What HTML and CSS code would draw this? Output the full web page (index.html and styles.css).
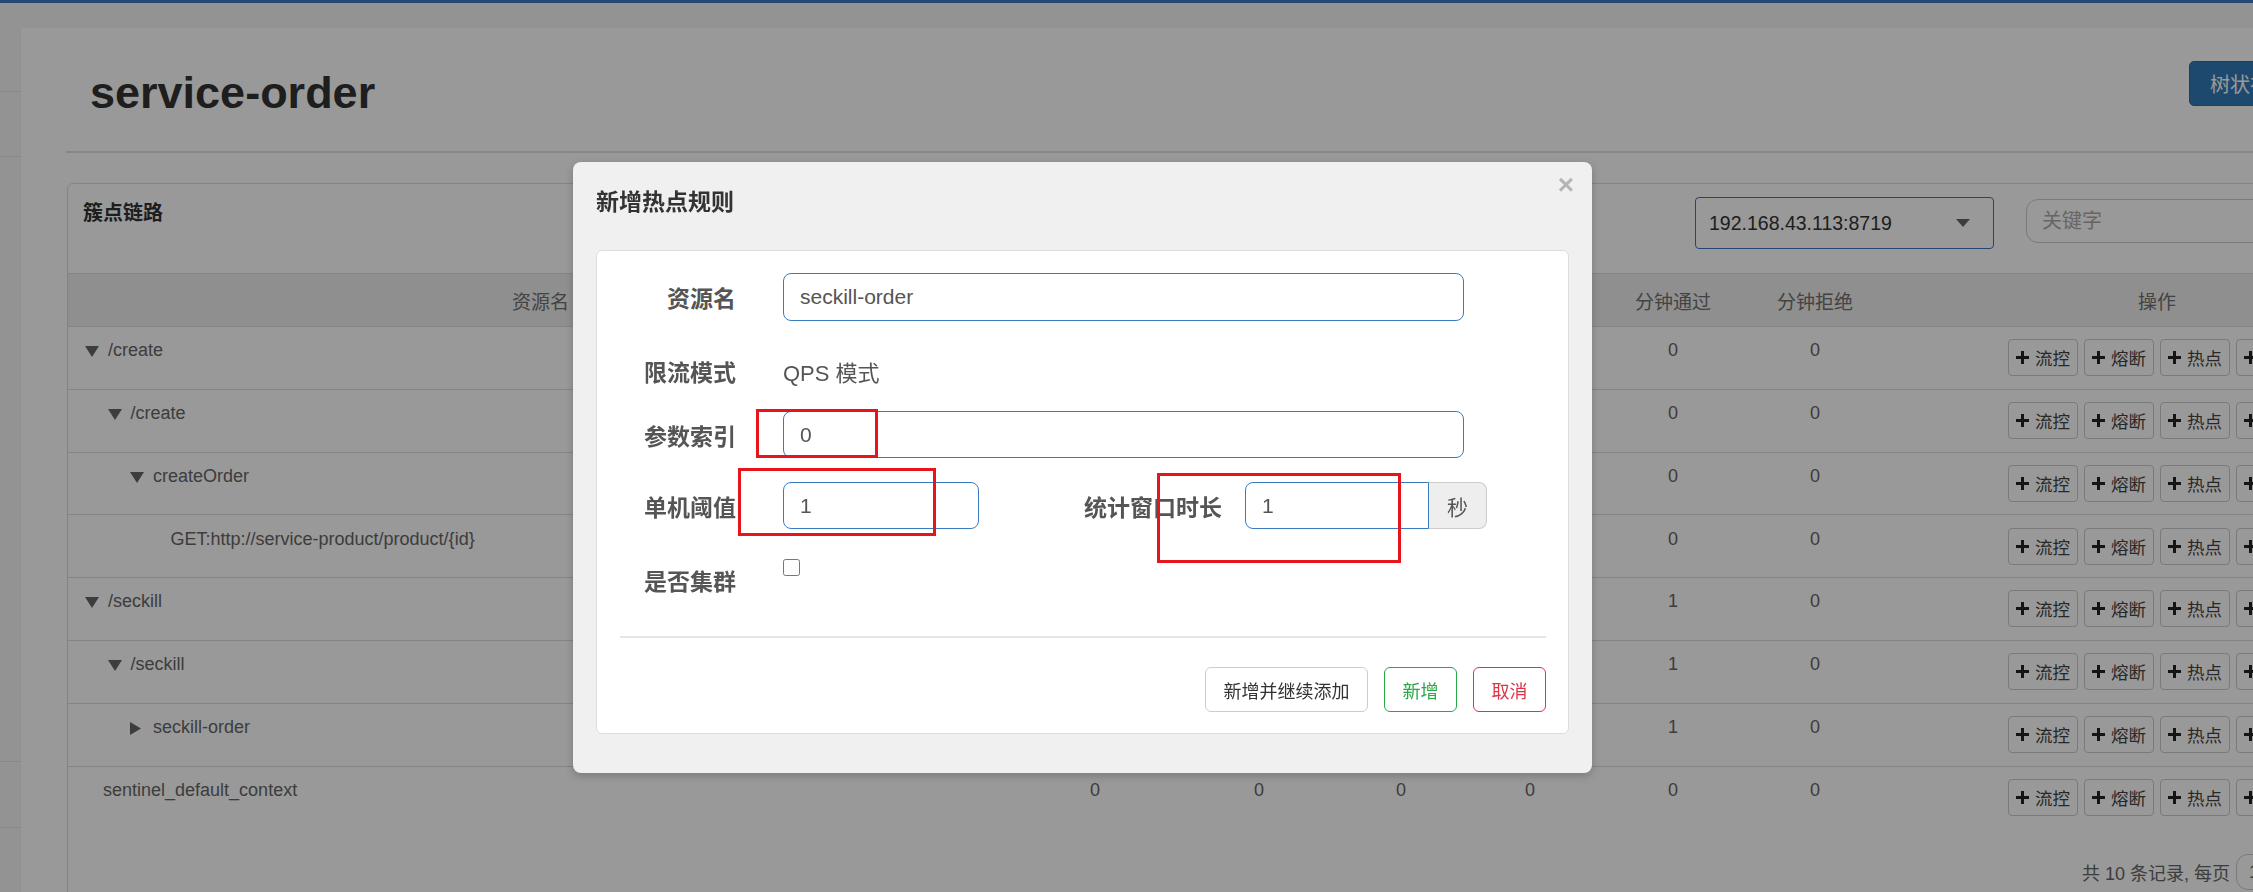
FILE: index.html
```html
<!DOCTYPE html>
<html lang="zh-CN">
<head>
    <meta charset="UTF-8">
    <meta name="viewport" content="width=device-width, initial-scale=1.0">
    <title>Sentinel 控制台 - 簇点链路</title>
    <link rel="stylesheet" href="styles.css">
</head>
<body>
    <div class="top-line"></div>
    <div class="app">
        <aside class="sidebar">
            <div class="side-item side-a"></div>
            <div class="side-item side-b"></div>
            <div class="side-item side-c"></div>
            <div class="side-item side-d"></div>
        </aside>

        <main class="content">
            <div class="crumb-bar"></div>
            <div class="page-header">
                <h1>service-order</h1>
                <div class="view-switch">
                    <button class="btn-view active">树状视图</button>
                    <button class="btn-view">列表视图</button>
                </div>
            </div>

            <div class="panel">
                <div class="panel-heading">
                    <h3>簇点链路</h3>
                    <div class="heading-tools">
                        <div class="machine-select">192.168.43.113:8719</div>
                        <input type="text" class="search-input" placeholder="关键字">
                        <button class="btn-search">刷新</button>
                    </div>
                </div>

                <table class="resource-table">
                    <colgroup>
                        <col class="col-name">
                        <col class="col-qps">
                        <col class="col-qps">
                        <col class="col-thread">
                        <col class="col-rt">
                        <col class="col-min">
                        <col class="col-min2">
                        <col>
                    </colgroup>
                    <thead>
                        <tr>
                            <th>资源名</th>
                            <th>通过QPS</th>
                            <th>拒绝QPS</th>
                            <th>并发数</th>
                            <th>平均RT</th>
                            <th>分钟通过</th>
                            <th>分钟拒绝</th>
                            <th>操作</th>
                        </tr>
                    </thead>
                    <tbody>
                        <tr>
                            <td class="name"><span class="toggle"><svg class="caret-down" viewBox="0 0 14 11"><path d="M0 0h14L7 11z"/></svg></span>/create</td>
                            <td>0</td><td>0</td><td>0</td><td>0</td><td>0</td><td>0</td>
                            <td><div class="ops"><button class="btn-op"><svg class="plus" viewBox="0 0 13 13"><path d="M5 0h3v5h5v3H8v5H5V8H0V5h5z"/></svg>流控</button><button class="btn-op"><svg class="plus" viewBox="0 0 13 13"><path d="M5 0h3v5h5v3H8v5H5V8H0V5h5z"/></svg>熔断</button><button class="btn-op"><svg class="plus" viewBox="0 0 13 13"><path d="M5 0h3v5h5v3H8v5H5V8H0V5h5z"/></svg>热点</button><button class="btn-op"><svg class="plus" viewBox="0 0 13 13"><path d="M5 0h3v5h5v3H8v5H5V8H0V5h5z"/></svg>授权</button></div></td>
                        </tr>
                        <tr>
                            <td class="name"><span class="indent lv1"></span><span class="toggle"><svg class="caret-down" viewBox="0 0 14 11"><path d="M0 0h14L7 11z"/></svg></span>/create</td>
                            <td>0</td><td>0</td><td>0</td><td>0</td><td>0</td><td>0</td>
                            <td><div class="ops"><button class="btn-op"><svg class="plus" viewBox="0 0 13 13"><path d="M5 0h3v5h5v3H8v5H5V8H0V5h5z"/></svg>流控</button><button class="btn-op"><svg class="plus" viewBox="0 0 13 13"><path d="M5 0h3v5h5v3H8v5H5V8H0V5h5z"/></svg>熔断</button><button class="btn-op"><svg class="plus" viewBox="0 0 13 13"><path d="M5 0h3v5h5v3H8v5H5V8H0V5h5z"/></svg>热点</button><button class="btn-op"><svg class="plus" viewBox="0 0 13 13"><path d="M5 0h3v5h5v3H8v5H5V8H0V5h5z"/></svg>授权</button></div></td>
                        </tr>
                        <tr>
                            <td class="name"><span class="indent lv2"></span><span class="toggle"><svg class="caret-down" viewBox="0 0 14 11"><path d="M0 0h14L7 11z"/></svg></span>createOrder</td>
                            <td>0</td><td>0</td><td>0</td><td>0</td><td>0</td><td>0</td>
                            <td><div class="ops"><button class="btn-op"><svg class="plus" viewBox="0 0 13 13"><path d="M5 0h3v5h5v3H8v5H5V8H0V5h5z"/></svg>流控</button><button class="btn-op"><svg class="plus" viewBox="0 0 13 13"><path d="M5 0h3v5h5v3H8v5H5V8H0V5h5z"/></svg>熔断</button><button class="btn-op"><svg class="plus" viewBox="0 0 13 13"><path d="M5 0h3v5h5v3H8v5H5V8H0V5h5z"/></svg>热点</button><button class="btn-op"><svg class="plus" viewBox="0 0 13 13"><path d="M5 0h3v5h5v3H8v5H5V8H0V5h5z"/></svg>授权</button></div></td>
                        </tr>
                        <tr>
                            <td class="name"><span class="indent lv3"></span><span class="leaf"></span>GET:http://service-product/product/{id}</td>
                            <td>0</td><td>0</td><td>0</td><td>0</td><td>0</td><td>0</td>
                            <td><div class="ops"><button class="btn-op"><svg class="plus" viewBox="0 0 13 13"><path d="M5 0h3v5h5v3H8v5H5V8H0V5h5z"/></svg>流控</button><button class="btn-op"><svg class="plus" viewBox="0 0 13 13"><path d="M5 0h3v5h5v3H8v5H5V8H0V5h5z"/></svg>熔断</button><button class="btn-op"><svg class="plus" viewBox="0 0 13 13"><path d="M5 0h3v5h5v3H8v5H5V8H0V5h5z"/></svg>热点</button><button class="btn-op"><svg class="plus" viewBox="0 0 13 13"><path d="M5 0h3v5h5v3H8v5H5V8H0V5h5z"/></svg>授权</button></div></td>
                        </tr>
                        <tr>
                            <td class="name"><span class="toggle"><svg class="caret-down" viewBox="0 0 14 11"><path d="M0 0h14L7 11z"/></svg></span>/seckill</td>
                            <td>0</td><td>0</td><td>0</td><td>0</td><td>1</td><td>0</td>
                            <td><div class="ops"><button class="btn-op"><svg class="plus" viewBox="0 0 13 13"><path d="M5 0h3v5h5v3H8v5H5V8H0V5h5z"/></svg>流控</button><button class="btn-op"><svg class="plus" viewBox="0 0 13 13"><path d="M5 0h3v5h5v3H8v5H5V8H0V5h5z"/></svg>熔断</button><button class="btn-op"><svg class="plus" viewBox="0 0 13 13"><path d="M5 0h3v5h5v3H8v5H5V8H0V5h5z"/></svg>热点</button><button class="btn-op"><svg class="plus" viewBox="0 0 13 13"><path d="M5 0h3v5h5v3H8v5H5V8H0V5h5z"/></svg>授权</button></div></td>
                        </tr>
                        <tr>
                            <td class="name"><span class="indent lv1"></span><span class="toggle"><svg class="caret-down" viewBox="0 0 14 11"><path d="M0 0h14L7 11z"/></svg></span>/seckill</td>
                            <td>0</td><td>0</td><td>0</td><td>0</td><td>1</td><td>0</td>
                            <td><div class="ops"><button class="btn-op"><svg class="plus" viewBox="0 0 13 13"><path d="M5 0h3v5h5v3H8v5H5V8H0V5h5z"/></svg>流控</button><button class="btn-op"><svg class="plus" viewBox="0 0 13 13"><path d="M5 0h3v5h5v3H8v5H5V8H0V5h5z"/></svg>熔断</button><button class="btn-op"><svg class="plus" viewBox="0 0 13 13"><path d="M5 0h3v5h5v3H8v5H5V8H0V5h5z"/></svg>热点</button><button class="btn-op"><svg class="plus" viewBox="0 0 13 13"><path d="M5 0h3v5h5v3H8v5H5V8H0V5h5z"/></svg>授权</button></div></td>
                        </tr>
                        <tr>
                            <td class="name"><span class="indent lv2"></span><span class="toggle"><svg class="caret-right" viewBox="0 0 11 13"><path d="M0 0l11 6.5L0 13z"/></svg></span>seckill-order</td>
                            <td>0</td><td>0</td><td>0</td><td>0</td><td>1</td><td>0</td>
                            <td><div class="ops"><button class="btn-op"><svg class="plus" viewBox="0 0 13 13"><path d="M5 0h3v5h5v3H8v5H5V8H0V5h5z"/></svg>流控</button><button class="btn-op"><svg class="plus" viewBox="0 0 13 13"><path d="M5 0h3v5h5v3H8v5H5V8H0V5h5z"/></svg>熔断</button><button class="btn-op"><svg class="plus" viewBox="0 0 13 13"><path d="M5 0h3v5h5v3H8v5H5V8H0V5h5z"/></svg>热点</button><button class="btn-op"><svg class="plus" viewBox="0 0 13 13"><path d="M5 0h3v5h5v3H8v5H5V8H0V5h5z"/></svg>授权</button></div></td>
                        </tr>
                        <tr class="last">
                            <td class="name"><span class="leaf"></span>sentinel_default_context</td>
                            <td>0</td><td>0</td><td>0</td><td>0</td><td>0</td><td>0</td>
                            <td><div class="ops"><button class="btn-op"><svg class="plus" viewBox="0 0 13 13"><path d="M5 0h3v5h5v3H8v5H5V8H0V5h5z"/></svg>流控</button><button class="btn-op"><svg class="plus" viewBox="0 0 13 13"><path d="M5 0h3v5h5v3H8v5H5V8H0V5h5z"/></svg>熔断</button><button class="btn-op"><svg class="plus" viewBox="0 0 13 13"><path d="M5 0h3v5h5v3H8v5H5V8H0V5h5z"/></svg>热点</button><button class="btn-op"><svg class="plus" viewBox="0 0 13 13"><path d="M5 0h3v5h5v3H8v5H5V8H0V5h5z"/></svg>授权</button></div></td>
                        </tr>
                    </tbody>
                </table>

                <div class="pager">
                    <span>共 10 条记录, 每页</span>
                    <div class="page-size">16</div>
                    <span class="pager-tail">条记录</span>
                </div>
            </div>
        </main>
    </div>

    <div class="backdrop"></div>

    <div class="modal">
        <div class="modal-header">
            <h4>新增热点规则</h4>
            <span class="close">×</span>
        </div>
        <div class="modal-card">
            <div class="form-row">
                <label class="form-label">资源名</label>
                <input type="text" class="form-input wide" value="seckill-order">
            </div>
            <div class="form-row row-static">
                <label class="form-label">限流模式</label>
                <span class="static-text">QPS 模式</span>
            </div>
            <div class="form-row row-index">
                <label class="form-label">参数索引</label>
                <input type="text" class="form-input wide" value="0">
            </div>
            <div class="form-row row-count">
                <label class="form-label">单机阈值</label>
                <input type="text" class="form-input short" value="1">
                <label class="form-label label-window">统计窗口时长</label>
                <div class="input-group">
                    <input type="text" class="form-input group-input" value="1">
                    <span class="addon">秒</span>
                </div>
            </div>
            <div class="form-row row-cluster">
                <label class="form-label">是否集群</label>
                <input type="checkbox" class="cluster-check">
            </div>
            <div class="divider"></div>
            <div class="modal-footer">
                <button class="btn btn-plain">新增并继续添加</button>
                <button class="btn btn-ok">新增</button>
                <button class="btn btn-cancel">取消</button>
            </div>
        </div>

        <div class="mark mark-index"></div>
        <div class="mark mark-count"></div>
        <div class="mark mark-window"></div>
    </div>
</body>
</html>
```

FILE: styles.css
```css
* {
    box-sizing: border-box;
}

body {
    margin: 0;
    width: 2253px;
    height: 892px;
    overflow: hidden;
    font-family: "Liberation Sans", "Noto Sans CJK SC", sans-serif;
    background-color: #fff;
    position: relative;
}

.top-line {
    height: 3px;
    background-color: #3b7bbf;
}

.app {
    display: flex;
}

/* left menu, collapsed */
.sidebar {
    width: 21px;
    flex: none;
    height: 889px;
    background-color: #f5f5f5;
}

.side-item {
    border-bottom: 1px solid #e2e2e2;
}

.side-a { height: 89px; }
.side-b { height: 65px; }
.side-c { height: 605px; }
.side-d { height: 66px; }

.content {
    width: 2426px;
    flex: none;
    background-color: #fff;
}

.crumb-bar {
    height: 25px;
    background-color: #f5f5f5;
}

.page-header {
    display: flex;
    align-items: flex-start;
    height: 125px;
    margin: 0 15px 0 45px;
    border-bottom: 2px solid #e2e2e2;
}

.page-header h1 {
    margin: 40px 0 0 24px;
    font-size: 45px;
    line-height: 1.1;
    color: #333;
    font-weight: bold;
}

.view-switch {
    display: flex;
    margin-left: auto;
    margin-top: 33px;
}

.btn-view {
    height: 45px;
    padding: 0 20px;
    font-family: inherit;
    font-size: 20px;
    color: #333;
    background-color: #fff;
    border: 1px solid #ccc;
    border-radius: 0 5px 5px 0;
    margin-left: -1px;
}

.btn-view.active {
    color: #fff;
    background-color: #337ab7;
    border-color: #2e6da4;
    border-radius: 5px 0 0 5px;
    margin-left: 0;
}

.panel {
    margin: 30px 15px 0 46px;
    border: 1px solid #ddd;
    border-radius: 6px;
    background-color: #fff;
    padding-bottom: 60px;
}

.panel-heading {
    display: flex;
    align-items: flex-start;
    height: 90px;
    padding: 15px 15px 0;
    border-bottom: 1px solid #ddd;
}

.panel-heading h3 {
    margin: 0;
    font-size: 20px;
    line-height: 28px;
    font-weight: bold;
    color: #333;
}

.heading-tools {
    display: flex;
    align-items: flex-start;
    margin-left: auto;
}

.machine-select {
    position: relative;
    width: 299px;
    height: 52px;
    margin-top: -2px;
    padding-left: 13px;
    border: 1px solid #3a78bd;
    border-radius: 4px;
    font-size: 19.5px;
    line-height: 50px;
    color: #333;
}

.machine-select::after {
    content: "";
    position: absolute;
    right: 23px;
    top: 21px;
    border-left: 7px solid transparent;
    border-right: 7px solid transparent;
    border-top: 8px solid #666;
}

.search-input {
    width: 300px;
    height: 44px;
    margin-left: 32px;
    padding: 0 15px;
    border: 1px solid #ccc;
    border-radius: 12px;
    font-family: inherit;
    font-size: 20px;
    color: #555;
}

.search-input::placeholder {
    color: #aaa;
}

.btn-search {
    width: 80px;
    height: 44px;
    margin-left: 10px;
    font-family: inherit;
    font-size: 18px;
    color: #fff;
    background-color: #337ab7;
    border: 1px solid #2e6da4;
    border-radius: 5px;
}

.resource-table {
    width: 100%;
    table-layout: fixed;
    border-collapse: separate;
    border-spacing: 0;
    font-size: 18px;
    color: #666;
}

.col-name { width: 945px; }
.col-qps { width: 164px; }
.col-thread { width: 120px; }
.col-rt { width: 138px; }
.col-min { width: 148px; }
.col-min2 { width: 136px; }

.resource-table th {
    height: 53px;
    padding: 0 10px;
    background-color: #eee;
    border-bottom: 1px solid #ddd;
    font-size: 19px;
    font-weight: normal;
    color: #707070;
    text-align: center;
    white-space: nowrap;
}

.resource-table td {
    padding: 12.3px 10px 12.5px;
    line-height: 23px;
    text-align: center;
    vertical-align: top;
    border-bottom: 1px solid #ddd;
}

.resource-table tr.last td {
    border-bottom: none;
}

.resource-table td.name {
    padding-left: 17px;
    text-align: left;
    white-space: nowrap;
}

.indent {
    display: inline-block;
}

.lv1 { width: 22.5px; }
.lv2 { width: 45px; }
.lv3 { width: 67.5px; }

.toggle {
    display: inline-block;
    width: 23px;
}

.leaf {
    display: inline-block;
    width: 18px;
}

.caret-down {
    width: 14px;
    height: 11px;
    vertical-align: middle;
    fill: #666;
}

.caret-right {
    width: 11px;
    height: 13px;
    vertical-align: middle;
    fill: #666;
}

.ops {
    display: flex;
    justify-content: center;
    gap: 6px;
}

.btn-op {
    display: flex;
    align-items: center;
    gap: 6px;
    height: 37px;
    padding: 0 7px;
    background-color: #fff;
    border: 1px solid #ccc;
    border-radius: 4px;
    font-family: inherit;
    font-size: 17.5px;
    color: #444;
}

.plus {
    width: 13px;
    height: 13px;
    fill: #222;
}

.pager {
    display: flex;
    justify-content: flex-end;
    align-items: center;
    padding: 26px 65px 0 0;
    font-size: 18px;
    color: #666;
}

.page-size {
    width: 70px;
    height: 36px;
    margin-left: 6px;
    padding-left: 12px;
    border: 1px solid #ccc;
    border-radius: 12px;
    line-height: 34px;
}

.pager-tail {
    margin-left: 6px;
}

.backdrop {
    position: fixed;
    top: 0;
    left: 0;
    width: 100%;
    height: 100%;
    background-color: rgba(0, 0, 0, 0.4);
    z-index: 10;
}

/* hot param rule dialog */
.modal {
    position: absolute;
    left: 573px;
    top: 162px;
    width: 1019px;
    height: 611px;
    background-color: #f0f0f0;
    border-radius: 8px;
    box-shadow: 0 3px 9px rgba(0, 0, 0, 0.2);
    z-index: 20;
}

.modal-header {
    position: relative;
    height: 88px;
    padding: 24px 23px 0;
}

.modal-header h4 {
    margin: 0;
    font-size: 23px;
    line-height: 32px;
    font-weight: bold;
    color: #333;
}

.close {
    position: absolute;
    top: 9px;
    right: 18px;
    font-size: 28px;
    line-height: 28px;
    font-weight: bold;
    color: #b5b5b5;
}

.modal-card {
    height: 484px;
    margin: 0 23px;
    padding-top: 22px;
    background-color: #fff;
    border: 1px solid #ddd;
    border-radius: 6px;
}

.form-row {
    display: flex;
    align-items: center;
    height: 48px;
}

.row-static { margin-top: 26px; }
.row-index { margin-top: 16px; height: 47px; }
.row-count { margin-top: 24px; height: 47px; }
.row-cluster { margin-top: 27px; }

.form-label {
    width: 139px;
    flex: none;
    margin-right: 47px;
    text-align: right;
    font-size: 23px;
    font-weight: bold;
    color: #555;
}

.label-window {
    width: 243px;
    margin-right: 23px;
}

.form-input {
    height: 100%;
    padding: 0 16px;
    border: 1px solid #3a7bbf;
    border-radius: 8px;
    font-family: inherit;
    font-size: 21px;
    color: #555;
    outline: none;
}

.form-input.wide { width: 681px; }
.form-input.short { width: 196px; }

.static-text {
    font-size: 22px;
    color: #555;
}

.input-group {
    display: flex;
    height: 100%;
}

.group-input {
    width: 184px;
    border-radius: 8px 0 0 8px;
}

.addon {
    width: 58px;
    display: flex;
    align-items: center;
    justify-content: center;
    background-color: #eee;
    border: 1px solid #ccc;
    border-left: none;
    border-radius: 0 8px 8px 0;
    font-size: 21px;
    color: #555;
}

.cluster-check {
    align-self: flex-start;
    width: 17px;
    height: 17px;
    margin: 3px 0 0;
}

.divider {
    height: 2px;
    margin: 32px 22px 0 23px;
    background-color: #e5e5e5;
}

.modal-footer {
    display: flex;
    justify-content: flex-end;
    gap: 16px;
    margin-top: 29px;
    padding-right: 22px;
}

.btn {
    height: 45px;
    padding: 0 17.5px;
    background-color: #fff;
    border: 1px solid #ccc;
    border-radius: 6px;
    font-family: inherit;
    font-size: 18px;
    color: #333;
}

.btn-ok {
    color: #28a745;
    border-color: #28a745;
}

.btn-cancel {
    color: #dc3545;
    border-color: #dc3545;
}

/* red annotation frames drawn over the dialog */
.mark {
    position: absolute;
    border: 3px solid #e8141c;
}

.mark-index {
    left: 183px;
    top: 247px;
    width: 122px;
    height: 49px;
}

.mark-count {
    left: 165px;
    top: 306px;
    width: 198px;
    height: 68px;
}

.mark-window {
    left: 584px;
    top: 311px;
    width: 244px;
    height: 90px;
}
```
